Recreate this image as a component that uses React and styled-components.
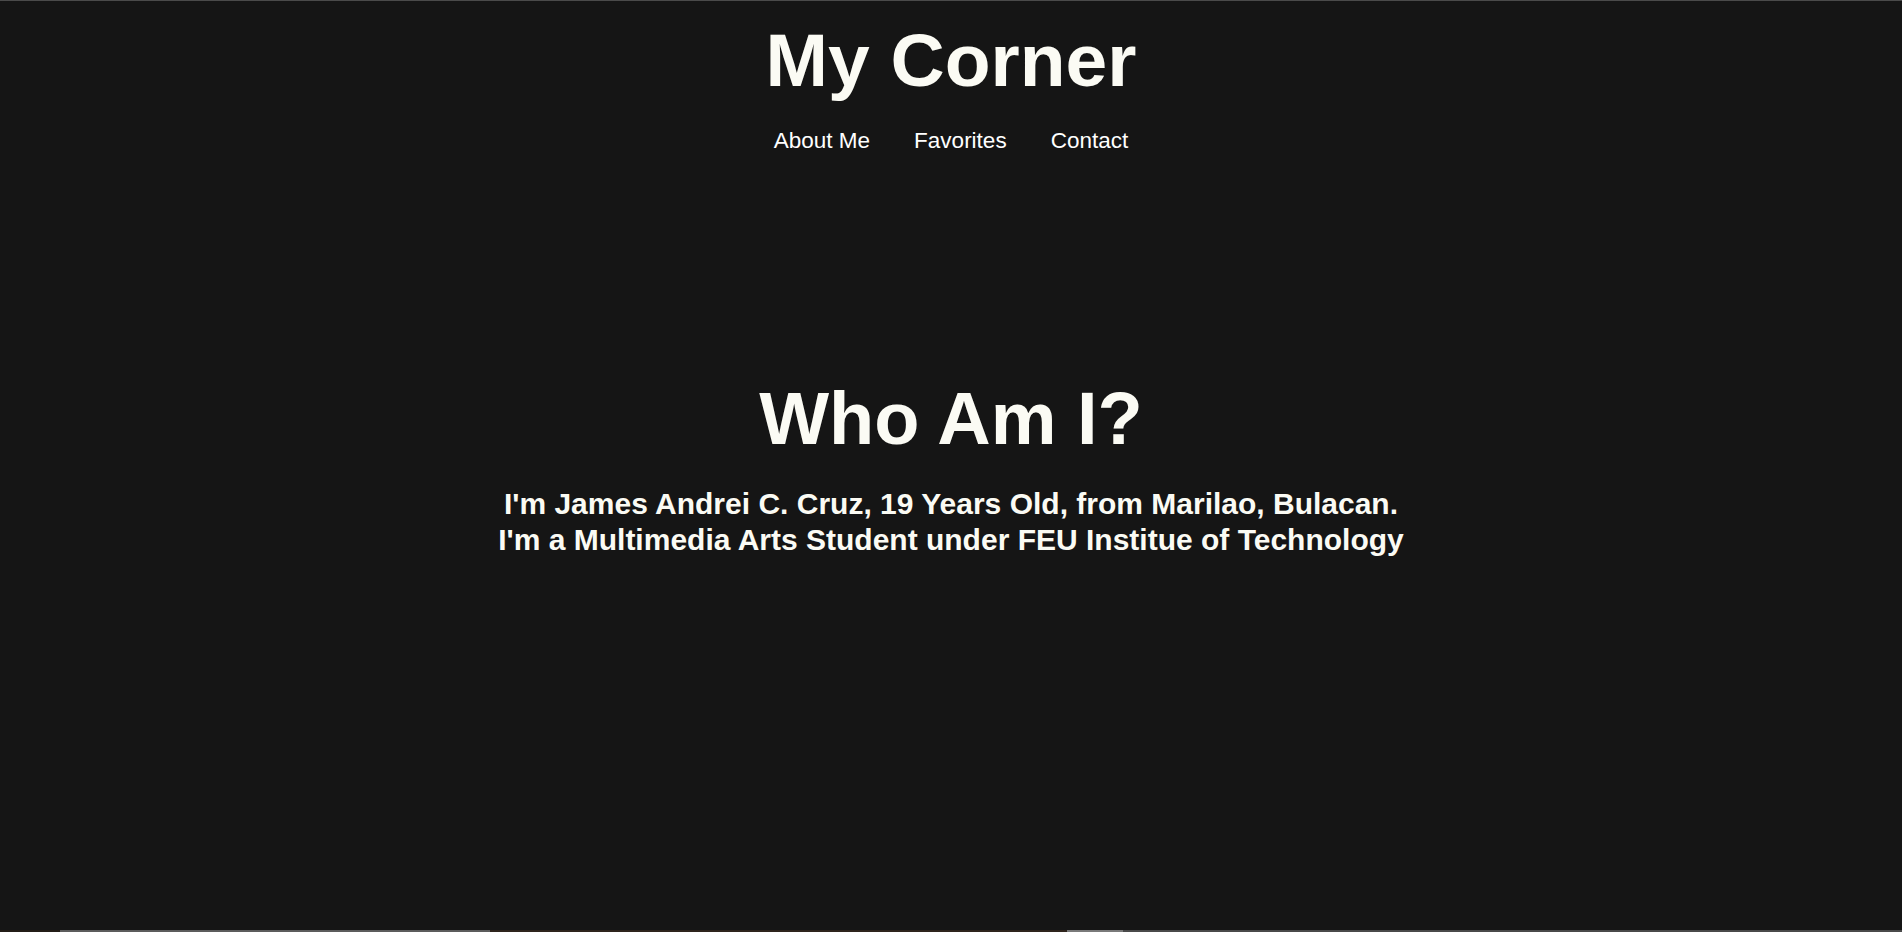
import React from 'react'
import styled, { createGlobalStyle } from "styled-components";

const GlobalStyle = createGlobalStyle`
    html, body {
        margin: 0;
        padding: 0;
        background-color: #151515;
    }
    body {
        font-family: "Liberation Sans", Arial, Helvetica, sans-serif;
        color: #fbfbf4;
    }
`;

const links = ["About Me", "Favorites", "Contact"];

const strip = [
    { width: 60, color: "#231c16" },
    { width: 430, color: "#5c5c5c" },
    { width: 577, color: "#2e241c" },
    { width: 56, color: "#7a7a7a" },
    { width: 779, color: "#4a4a4a" },
];

export default function App() {
    return (
        <>
            <GlobalStyle />
            <Header>
                <Title>My Corner</Title>
                <Nav>
                    {links.map((link) => (
                        <NavLink key={link} href="#">{link}</NavLink>
                    ))}
                </Nav>
            </Header>

            <Hero>
                <Heading>Who Am I?</Heading>
                <Intro>
                    I'm James Andrei C. Cruz, 19 Years Old, from Marilao, Bulacan.
                    <br />
                    I'm a Multimedia Arts Student under FEU Institue of Technology
                </Intro>
            </Hero>

            <Gallery>
                {strip.map((tile, index) => (
                    <Tile key={index} $grow={tile.width} $color={tile.color} />
                ))}
            </Gallery>
        </>
    );
}

const Header = styled.header`
    display: flex;
    flex-direction: column;
    align-items: center;
    border-top: 1px solid #4a4a4a;
    padding-top: 22px;
`;

const Title = styled.h1`
    margin: 0;
    font-size: 75px;
    line-height: 1;
    font-weight: 700;
    color: #fbfbf4;
`;

const Nav = styled.nav`
    display: flex;
    gap: 44px;
    margin-top: 32px;
`;

const NavLink = styled.a`
    font-size: 22.5px;
    line-height: 1;
    color: #ffffff;
    text-decoration: none;
`;

const Hero = styled.section`
    display: flex;
    flex-direction: column;
    align-items: center;
    height: 777px;
    box-sizing: border-box;
    padding-top: 229px;
    text-align: center;
`;

const Heading = styled.h2`
    margin: 0;
    font-size: 74px;
    line-height: 1;
    font-weight: 700;
`;

const Intro = styled.p`
    margin: 30px 0 0;
    font-size: 30px;
    line-height: 36px;
    font-weight: 700;
`;

const Gallery = styled.section`
    display: flex;
    height: 320px;
`;

const Tile = styled.div`
    flex: ${(p) => p.$grow} 1 0;
    background-color: ${(p) => p.$color};
`;
